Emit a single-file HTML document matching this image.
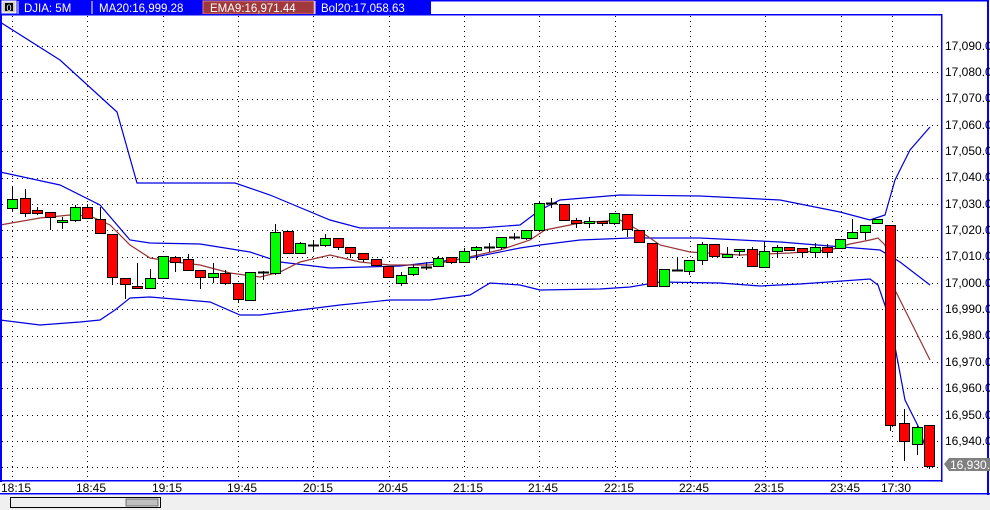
<!DOCTYPE html>
<html><head><meta charset="utf-8"><style>
body{margin:0;width:990px;height:510px;overflow:hidden;background:#fff;font-family:"Liberation Sans",sans-serif;}
svg{display:block}
text{font-family:"Liberation Sans",sans-serif;}
</style></head><body>
<svg id="s" width="990" height="510" xmlns="http://www.w3.org/2000/svg">
<rect x="0" y="0" width="990" height="510" fill="#fff"/>
<rect x="0" y="0" width="988" height="1.5" fill="#0000ff"/>
<rect x="987" y="0" width="2" height="495" fill="#0000ff"/>
<rect x="0" y="0" width="431" height="14" fill="#0000ff"/>
<rect x="2" y="1" width="14" height="12" fill="#d4d0c8" stroke="#fff" stroke-width="1"/>
<rect x="5" y="3" width="8" height="8" fill="#000"/>
<text x="9" y="11" font-size="9" fill="#fff" text-anchor="middle">0</text>
<line x1="18" y1="1" x2="18" y2="14" stroke="#fff"/>
<text x="24" y="12" font-size="11.5" fill="#fff">DJIA: 5M</text>
<line x1="92" y1="1" x2="92" y2="14" stroke="#fff"/>
<text x="99" y="12" font-size="11.5" fill="#fff">MA20:16,999.28</text>
<rect x="203" y="1" width="111" height="13" fill="#a0383c" stroke="#e08080"/>
<text x="210" y="12" font-size="11.5" fill="#fff">EMA9:16,971.44</text>
<line x1="315" y1="1" x2="315" y2="14" stroke="#fff"/>
<text x="321" y="12" font-size="11.5" fill="#fff">Bol20:17,058.63</text>
<g id="grid"></g>
<g id="lines" fill="none" stroke-width="1.2">
<polyline stroke="#0000e0" points="0,22 60,60 117,112 137,183 235,183 270,195 330,220 360,228 480,228 520,225 540,210 560,200 620,195 700,196 780,200 840,212 870,220 885,215 895,180 910,150 930,127"/>
<polyline stroke="#0000e0" points="0,172 60,185 100,205 130,240 150,243 200,244 250,252 280,262 330,268 400,266 470,258 520,248 540,245 580,240 630,238 700,238 780,242 830,246 880,250 900,262 930,285"/>
<polyline stroke="#0000e0" points="0,320 40,325 80,322 100,320 115,310 130,298 150,297 210,302 240,315 260,315 340,305 390,300 430,300 470,295 490,283 520,285 540,290 600,289 630,287 660,282 720,283 760,286 800,284 870,279 878,285 890,320 905,400 920,430 929,460"/>
<polyline stroke="#993333" points="0,225 40,218 70,215 90,216 110,225 130,245 150,258 175,262 200,265 230,273 260,277 280,272 300,262 330,255 360,262 390,265 430,265 460,259 500,250 530,240 545,230 580,223 620,220 640,231 660,245 690,252 740,255 790,253 830,250 850,244 870,240 878,238 885,245 895,290 930,360"/>
</g>
<g id="candles"></g>
<rect x="0" y="14" width="942" height="1.5" fill="#0000ff"/>
<rect x="941" y="14" width="1.5" height="468" fill="#0000ff"/>
<rect x="0" y="14" width="2" height="468" fill="#0000ff"/>
<rect x="0" y="480" width="942" height="1.5" fill="#0000ff"/>
<g font-size="12" fill="#000">
<text x="945" y="50">17,090.0</text>
<text x="945" y="76">17,080.0</text>
<text x="945" y="102">17,070.0</text>
<text x="945" y="129">17,060.0</text>
<text x="945" y="155">17,050.0</text>
<text x="945" y="181">17,040.0</text>
<text x="945" y="208">17,030.0</text>
<text x="945" y="234">17,020.0</text>
<text x="945" y="260">17,010.0</text>
<text x="945" y="287">17,000.0</text>
<text x="945" y="313">16,990.0</text>
<text x="945" y="339">16,980.0</text>
<text x="945" y="366">16,970.0</text>
<text x="945" y="392">16,960.0</text>
<text x="945" y="419">16,950.0</text>
<text x="945" y="445">16,940.0</text>
</g>
<polygon points="944,464 949,458 990,458 990,471 949,471" fill="#808080"/>
<text x="950" y="469" font-size="12" fill="#fff">16,930.9</text>
<g font-size="12" fill="#000" text-anchor="middle">
<text x="16" y="492">18:15</text>
<text x="91" y="492">18:45</text>
<text x="167" y="492">19:15</text>
<text x="242" y="492">19:45</text>
<text x="318" y="492">20:15</text>
<text x="393" y="492">20:45</text>
<text x="468" y="492">21:15</text>
<text x="543" y="492">21:45</text>
<text x="619" y="492">22:15</text>
<text x="694" y="492">22:45</text>
<text x="769" y="492">23:15</text>
<text x="845" y="492">23:45</text>
<text x="896" y="492">17:30</text>
</g>
<rect x="0" y="493" width="990" height="1.5" fill="#0000ff"/>
<rect x="0" y="495" width="990" height="15" fill="#f0f0f0"/>
<rect x="10.5" y="497.5" width="150" height="10" fill="#f0f0f0" stroke="#000"/>
<rect x="126" y="499" width="32" height="7" fill="#c0c0c0" stroke="#555" stroke-width="0.8"/>
</svg>
<script>
var NS="http://www.w3.org/2000/svg";
function el(t,a,p){var e=document.createElementNS(NS,t);for(var k in a)e.setAttribute(k,a[k]);p.appendChild(e);return e;}
var g=document.getElementById("grid");
var gx=[12,87,163,238,313,389,464,539,615,690,765,841,892];
for(var y=46;y<480;y+=26.33){el("line",{x1:2,x2:941,y1:Math.round(y)+.5,y2:Math.round(y)+.5,stroke:"#000","stroke-dasharray":"1 4"},g);}
gx.forEach(function(x){el("line",{x1:x+.5,x2:x+.5,y1:16,y2:480,stroke:"#000","stroke-dasharray":"1 4"},g);});
var C=[
[12,'g',199,208,187,211],[24.6,'r',198,213,189,217],[37,'r',210,213,207,215],[50,'r',212,217,212,230],[62,'g',220,222,217,229],[75,'g',207,220,205,222],[87,'r',207,218,205,218],[100,'r',219,233,207,233],[112,'r',234,277,234,285],[125,'r',278,284,278,299],[137,'r',286,288,263,288],[150,'g',278,288,269,288],[163,'g',256,278,256,278],[175,'r',257,262,256,272],[188,'r',259,270,254,271],[200,'r',270,277,270,289],[213,'g',273,277,263,283],[225,'r',273,283,270,285],[238,'r',283,299,283,303],[250,'g',272,300,272,301],[263,'k',272,272,271,280],[275,'g',232,273,224,275],[288,'r',231,253,231,253],[300,'g',243,253,242,253],[313,'k',245,245,240,252],[325,'g',238,245,234,247],[338,'r',238,247,238,250],[350,'r',247,253,247,258],[363,'r',253,259,253,262],[376,'r',259,265,259,267],[388,'r',266,277,266,277],[401,'g',275,283,272,286],[413,'g',267,274,265,276],[426,'k',267,267,262,270],[438,'g',258,266,256,267],[451,'r',257,262,257,264],[464,'g',251,262,248,263],[476,'g',247,250,246,260],[489,'k',247,247,243,252],[501,'g',237,247,237,250],[514,'k',237,237,233,240],[526,'g',230,238,230,240],[539,'g',203,230,202,230],[551,'k',203,203,198,208],[564,'r',204,220,204,220],[576,'r',220,223,218,228],[589,'g',221,223,217,228],[602,'r',221,223,221,226],[614,'g',213,223,213,225],[627,'r',214,229,214,237],[639,'r',230,242,230,243],[652,'r',243,286,243,286],[664,'g',269,286,269,287],[677,'k',270,270,257,270],[689,'g',260,271,260,275],[702,'g',244,260,242,265],[714,'r',244,256,244,256],[727,'g',254,257,247,258],[739,'g',249,251,249,256],[752,'r',249,266,247,266],[764,'g',251,267,241,267],[777,'g',247,251,245,258],[789,'r',247,250,247,250],[802,'r',248,252,248,258],[815,'g',247,252,243,258],[827,'r',247,252,244,257],[840,'g',239,248,239,248],[852,'g',232,238,219,238],[865,'g',225,232,225,240],[877,'g',219,223,219,223],[890,'r',225,425,225,431],[904,'r',423,441,409,461],[917,'g',427,444,426,455],[929,'r',425,466,425,469]];
var cg=document.getElementById("candles");
C.forEach(function(c){var x=Math.round(c[0]);
el("line",{x1:x+.5,x2:x+.5,y1:c[4],y2:c[5],stroke:"#000"},cg);
if(c[1]=='k'){el("line",{x1:x-5,x2:x+6,y1:c[2]+.5,y2:c[2]+.5,stroke:"#000","stroke-width":2},cg);}
else el("rect",{x:x-4.5,y:c[2]+.5,width:10,height:Math.max(1,c[3]-c[2]),fill:c[1]=='g'?"#00ff00":"#ff0000",stroke:"#000"},cg);});
</script>
</body></html>
